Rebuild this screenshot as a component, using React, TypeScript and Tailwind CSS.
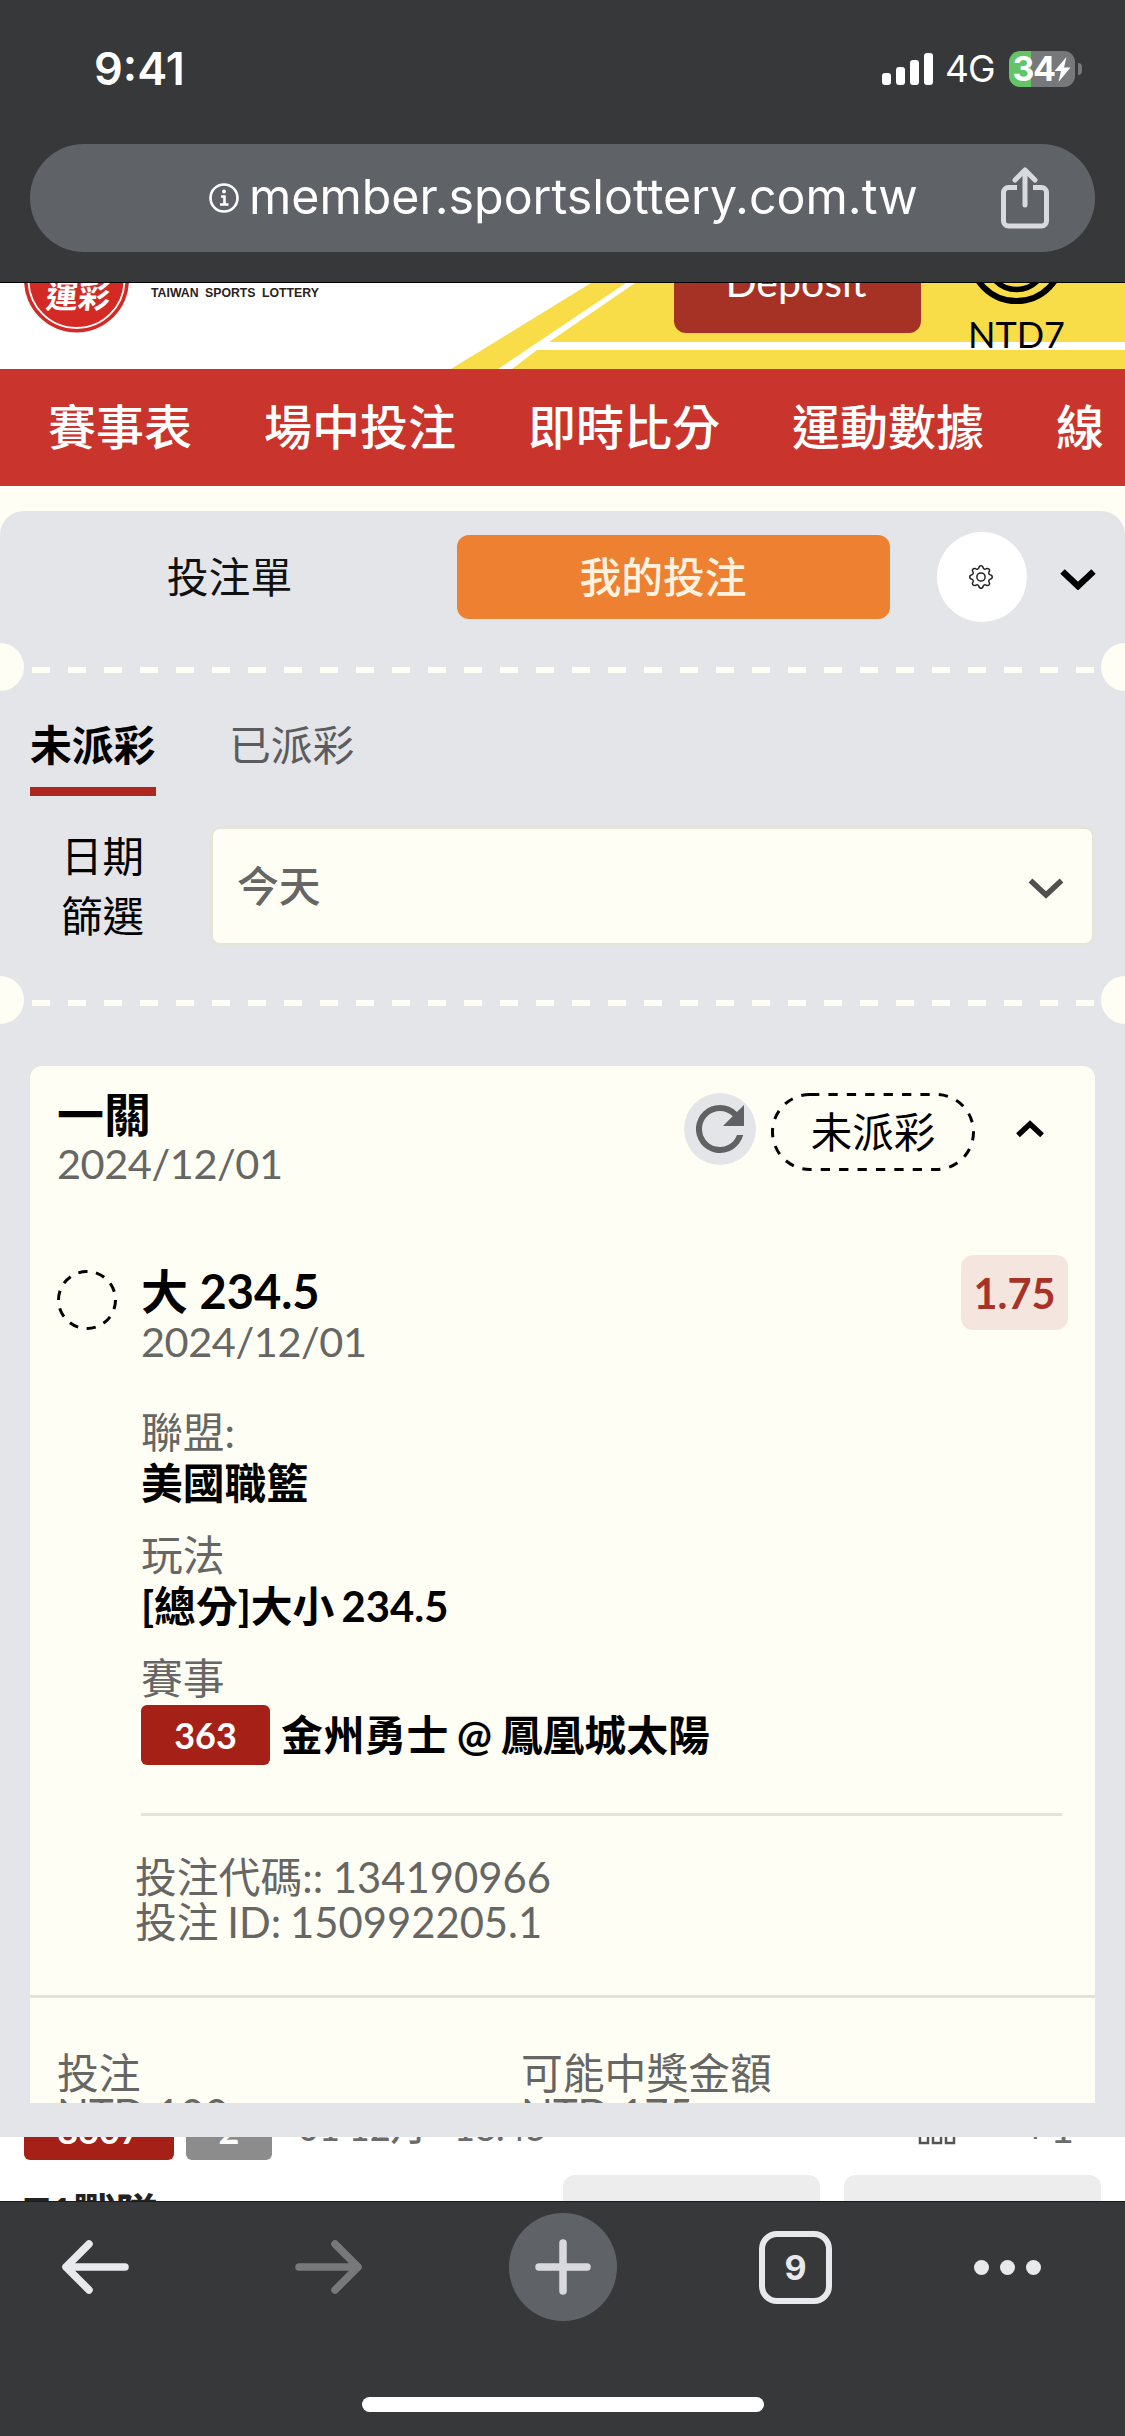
import { ReactNode } from "react";
import { clsx } from "clsx";

const navItems = ["賽事表", "場中投注", "即時比分", "運動數據", "線"];

const details = [
  { label: "聯盟:", value: "美國職籃" },
  { label: "玩法", value: "[總分]大小 234.5" },
];

const signalBars = ["h-3", "h-[18px]", "h-[25px]", "h-8"];

type ChevronProps = {
  className: string;
  strokeWidth?: number;
  up?: boolean;
};

const Chevron = ({ className, strokeWidth = 6.5, up = false }: ChevronProps) => (
  <svg
    viewBox="0 0 36 21"
    fill="none"
    stroke="currentColor"
    strokeWidth={strokeWidth}
    className={clsx(className, up && "rotate-180")}>
    <path d="M2.500 2.500L18 17 33.500 2.500" />
  </svg>
);

const StatusBar = () => (
  <div className="flex h-[144px] items-start justify-between pl-[94px] pr-[43px] pt-[42px] text-white">
    <span className="text-[45px] font-semibold leading-[54px]">9:41</span>
    <div className="flex h-[54px] items-center">
      <div className="flex h-8 items-end gap-[5px]">
        {signalBars.map((height) => (
          <span key={height} className={clsx("w-[9px] rounded-[3px] bg-white", height)} />
        ))}
      </div>
      <span className="ml-3 w-[52px] text-[37px] leading-[54px] tracking-[-1px]">4G</span>
      <div className="ml-[12px] flex h-9 w-[66px] items-center justify-center rounded-[11px] bg-linear-to-r from-[#65c466] from-33% to-[#77787a] to-33% text-[34px] font-bold leading-9 tracking-[-1.500px]">
        34
        <svg viewBox="0 0 16 25" className="h-[25px] w-[17px] fill-white">
          <path d="M12 0L0 14h6.500L4 25 16 10.500H9.500z" />
        </svg>
      </div>
      <span className="ml-[3px] h-3 w-1 rounded-r-full bg-[#77787a]" />
    </div>
  </div>
);

const AddressBar = () => (
  <div className="mx-[30px] flex h-[108px] items-center rounded-full bg-[#5f6267] pl-[179px] pr-[45px] text-white">
    <svg viewBox="0 0 30 30" fill="none" stroke="currentColor" strokeWidth="2.600" className="h-[30px] w-[30px]">
      <circle cx="15" cy="15" r="13.500" />
      <path d="M12 13.500h3.500v7.500M11 21.500h8.500" />
      <circle cx="15" cy="8.500" r="2" fill="currentColor" stroke="none" />
    </svg>
    <span className="-mt-[2px] ml-[10px] text-[48.300px] leading-none">member.sportslottery.com.tw</span>
    <svg
      viewBox="0 0 50 62"
      fill="none"
      stroke="#d9dae0"
      strokeWidth="5"
      className="ml-auto h-[62px] w-[50px]">
      <path d="M17 20.500H8.500a5 5 0 0 0-5 5v28.500a5 5 0 0 0 5 5h33a5 5 0 0 0 5-5V25.500a5 5 0 0 0-5-5H33" />
      <path d="M25 38V4M15 13L25 3l10 10" strokeLinecap="round" strokeLinejoin="round" />
    </svg>
  </div>
);

const SiteHeader = () => (
  <div className="relative h-[86px] overflow-hidden bg-white">
    <svg viewBox="0 0 1125 86" className="absolute inset-0 h-full w-full">
      <path d="M451 86L591 0H1125V86z" fill="#f9dd48" />
      <path d="M498 86L626 0h9L549 59h576v8H537L512 86z" fill="#fff" />
      <circle cx="76.500" cy="-3" r="52.500" fill="#d32a26" />
      <circle cx="76.500" cy="-3" r="48" fill="none" stroke="#fff" strokeWidth="1.800" />
      <circle cx="1016.500" cy="-28" r="46" fill="none" stroke="#000" strokeWidth="6" />
      <circle cx="1016.500" cy="-23" r="29.500" fill="none" stroke="#000" strokeWidth="5.500" />
    </svg>
    <div className="relative flex">
      <span className="-mt-[3px] ml-[44px] w-[107px] -skew-x-6 text-[32px] font-bold leading-8 text-white">
        運彩
      </span>
      <span className="mt-1 w-[200px] whitespace-nowrap font-['Liberation_Sans',sans-serif] text-[12.300px] font-bold leading-3 text-[#2b2220] [word-spacing:3px]">
        TAIWAN SPORTS LOTTERY
      </span>
      <div className="-mt-[34px] ml-[323px] h-[84px] w-[247px] rounded-xl bg-[#a63226] pr-[3px] pt-[8px] text-center text-[41px] leading-[50px] text-white">
        Deposit
      </div>
      <span className="ml-[47px] mt-[29px] text-[36px] leading-[44px] text-black">NTD7</span>
    </div>
  </div>
);

const Perforation = () => (
  <div className="flex h-12 items-center overflow-hidden">
    <span className="-ml-6 h-12 w-12 shrink-0 rounded-full bg-[#fffef5]" />
    <div className="mt-1.5 flex flex-1 justify-between px-[7.500px]">
      {Array.from({ length: 30 }, (_, i) => (
        <span key={i} className="h-1.5 w-[18px] bg-[#fffef5]" />
      ))}
    </div>
    <span className="-mr-6 h-12 w-12 shrink-0 rounded-full bg-[#fffef5]" />
  </div>
);

const PanelHeader = () => (
  <div className="flex h-[132px] items-center">
    <span className="w-[457px] pl-[2px] text-center text-[41.800px] text-[#111]">投注單</span>
    <div className="flex h-[84px] w-[433px] items-center justify-center rounded-xl bg-[#ee8131] pr-[21px] text-[41.800px] font-medium text-[#fff3e0]">
      我的投注
    </div>
    <div className="ml-[47px] flex h-[90px] w-[90px] items-center justify-center rounded-full bg-white pr-[2px]">
      <svg viewBox="0 0 16 16" className="h-6 w-6 fill-[#222]">
        <path d="M8 4.754a3.246 3.246 0 1 0 0 6.492 3.246 3.246 0 0 0 0-6.492M5.754 8a2.246 2.246 0 1 1 4.492 0 2.246 2.246 0 0 1-4.492 0" />
        <path d="M9.796 1.343c-.527-1.790-3.065-1.790-3.592 0l-.094.319a.873.873 0 0 1-1.255.520l-.292-.160c-1.640-.892-3.433.902-2.540 2.541l.159.292a.873.873 0 0 1-.520 1.255l-.319.094c-1.790.527-1.790 3.065 0 3.592l.319.094a.873.873 0 0 1 .520 1.255l-.160.292c-.892 1.640.901 3.434 2.541 2.540l.292-.159a.873.873 0 0 1 1.255.520l.094.319c.527 1.790 3.065 1.790 3.592 0l.094-.319a.873.873 0 0 1 1.255-.520l.292.160c1.640.893 3.434-.902 2.540-2.541l-.159-.292a.873.873 0 0 1 .520-1.255l.319-.094c1.790-.527 1.790-3.065 0-3.592l-.319-.094a.873.873 0 0 1-.520-1.255l.160-.292c.893-1.640-.902-3.433-2.541-2.540l-.292.159a.873.873 0 0 1-1.255-.520zm-2.633.283c.246-.835 1.428-.835 1.674 0l.094.319a1.873 1.873 0 0 0 2.693 1.115l.291-.160c.764-.415 1.600.420 1.184 1.185l-.159.292a1.873 1.873 0 0 0 1.116 2.692l.318.094c.835.246.835 1.428 0 1.674l-.319.094a1.873 1.873 0 0 0-1.115 2.693l.160.291c.415.764-.420 1.600-1.185 1.184l-.291-.159a1.873 1.873 0 0 0-2.693 1.116l-.094.318c-.246.835-1.428.835-1.674 0l-.094-.319a1.873 1.873 0 0 0-2.692-1.115l-.292.160c-.764.415-1.600-.420-1.184-1.185l.159-.291A1.873 1.873 0 0 0 1.945 8.930l-.319-.094c-.835-.246-.835-1.428 0-1.674l.319-.094A1.873 1.873 0 0 0 3.060 4.377l-.160-.292c-.415-.764.420-1.600 1.185-1.184l.292.159a1.873 1.873 0 0 0 2.692-1.115z" />
      </svg>
    </div>
    <Chevron className="ml-[33px] mt-1 h-[21px] w-9 text-black" />
  </div>
);

const Filters = () => (
  <div className="h-[285px] pt-[24px]">
    <div className="flex gap-[73px] pl-[30px] text-[41.800px] leading-[60px]">
      <span className="h-[81px] w-[126px] border-b-[9px] border-[#ae2620] font-bold text-black">未派彩</span>
      <span className="text-[#5c5c5e]">已派彩</span>
    </div>
    <div className="mt-[30px] flex">
      <div className="w-[210px] pl-[61px] text-[41.500px] leading-[60px] text-black">
        日期
        <br />
        篩選
      </div>
      <div className="flex h-[120px] w-[885px] items-center justify-between rounded-[10px] border-[3px] border-[#e5e4da] bg-[#fffef5] pl-6 pr-7 text-[41.800px] font-medium text-[#666664]">
        今天
        <Chevron strokeWidth={5.5} className="mt-1 h-[21px] w-9 text-[#50504e]" />
      </div>
    </div>
  </div>
);

const Label = ({ children }: { children: ReactNode }) => (
  <p className="text-[41.800px] leading-[50px] text-[#666664]">{children}</p>
);

const DateLine = () => (
  <p className="text-[41.500px] leading-[46px] tracking-[-0.450px] text-[#666664]">2024/12/01</p>
);

const BetCard = () => (
  <div className="mx-[30px] mt-[42px] h-[1037px] overflow-hidden rounded-t-xl bg-[#fffef5]">
    <div className="flex h-[189px] pl-[27px] pt-[23px]">
      <div className="w-[627px]">
        <p className="text-[47px] font-bold leading-[51px] text-black">一關</p>
        <DateLine />
      </div>
      <div className="mt-1 flex h-[72px] w-[72px] items-center justify-center rounded-full bg-[#e4e5e8]">
        <svg viewBox="4 4 16 16" className="h-[48px] w-[48px] fill-[#616163]">
          <path d="M17.650 6.350A7.958 7.958 0 0 0 12 4a8 8 0 1 0 7.730 10h-2.080A6 6 0 1 1 12 6c1.660 0 3.140.690 4.220 1.780L13 11h7V4z" />
        </svg>
      </div>
      <div className="relative ml-[15px] mt-1 flex h-[78px] w-[204px] items-center justify-center text-[41.500px] text-black">
        <svg viewBox="0 0 204 78" fill="none" className="absolute inset-0">
          <rect x="1.500" y="1.500" width="201" height="75" rx="37.500" stroke="#000" strokeWidth="3" strokeDasharray="9.300 9.100" />
        </svg>
        未派彩
      </div>
      <Chevron up strokeWidth={7} className="ml-[41px] mt-[31px] h-[18px] w-7 text-black" />
    </div>

    <div className="flex pl-[27px]">
      <svg viewBox="0 0 60 60" fill="none" className="mt-[15px] h-[60px] w-[60px]">
        <circle cx="30" cy="30" r="28.500" stroke="#000" strokeWidth="3" strokeDasharray="9.300 8.600" />
      </svg>
      <div className="ml-6 w-[820px] pt-[10px]">
        <p className="text-[47px] font-bold leading-[53px] text-black">大 234.5</p>
        <DateLine />
      </div>
      <div className="h-[75px] w-[107px] rounded-xl bg-[#f4e5df] text-center text-[41.500px] font-bold leading-[77px] text-[#a93226]">
        1.75
      </div>
    </div>

    <div className="ml-[111px] mr-[33px] h-[452px] border-b-[3px] border-[#e4e3da] pt-[43px]">
      {details.map(({ label, value }) => (
        <div key={label} className="mb-[21px]">
          <Label>{label}</Label>
          <p className="text-[41.800px] font-bold leading-[52px] text-black [word-spacing:-3px]">{value}</p>
        </div>
      ))}
      <Label>賽事</Label>
      <div className="mt-0.5 flex items-center text-[41.800px] font-bold leading-[60px] text-black [word-spacing:-1.500px]">
        <span className="mr-[11px] h-[60px] w-[129px] rounded-md bg-[#a52017] text-center text-[36px] text-white">
          363
        </span>
        金州勇士 @ 鳳凰城太陽
      </div>
    </div>

    <div className="h-[182px] border-b-[3px] border-[#e4e3da] pl-[105px] pt-[39px] text-[41.800px] leading-[45px] text-[#666664]">
      <p className="[word-spacing:-1px]">投注代碼:: 134190966</p>
      <p className="[word-spacing:-2px]">投注 ID: 150992205.1</p>
    </div>

    <div className="grid grid-cols-[464px_1fr] pl-[27px] pt-[53px] text-[41.800px] leading-[44px] text-[#666664]">
      <span>投注</span>
      <span>可能中獎金額</span>
      <span className="-mt-[3px]">NTD 100</span>
      <span className="-mt-[3px]">NTD 175</span>
    </div>
  </div>
);

const MatchList = () => (
  <div className="h-[64px] overflow-hidden bg-white">
    <div className="flex h-[38px] items-end text-[36px] leading-[50px] text-[#6b6b6b]">
      <div className="mb-[15px] ml-6 w-[150px] rounded-md bg-[#a52017] text-center text-[36px] font-bold leading-[60px] text-white">
        8607
      </div>
      <div className="mb-[15px] ml-3 w-[86px] rounded-md bg-[#8c8c8c] text-center text-[36px] font-bold leading-[60px] text-white">
        2
      </div>
      <span className="mb-[23px] ml-[26px] w-[156px] whitespace-nowrap font-medium">01 12月</span>
      <span className="mb-[23px] font-medium">18:45</span>
      <svg viewBox="0 0 38 36" fill="none" stroke="#555" strokeWidth="2.500" className="mb-[30px] ml-auto h-9 w-[38px]">
        <path d="M2 12h8v22H2zM15 4h8v30h-8zM28 16h8v18h-8z" />
      </svg>
      <span className="mb-[22px] ml-[67px] mr-[48px] text-[41px] tracking-[3px]">+1</span>
    </div>
    <div className="flex">
      <p className="ml-6 w-[539px] pt-[8px] text-[42px] font-bold leading-[60px] text-[#222]">T1戰隊</p>
      <div className="h-[90px] w-[257px] rounded-xl bg-[#ededed]" />
      <div className="ml-6 h-[90px] w-[257px] rounded-xl bg-[#ededed]" />
    </div>
  </div>
);

const Arrow = ({ className }: { className: string }) => (
  <svg
    viewBox="0 0 67 54"
    fill="none"
    stroke="currentColor"
    strokeWidth="7.500"
    strokeLinecap="round"
    strokeLinejoin="round"
    className={clsx("h-[54px] w-[67px]", className)}>
    <path d="M63 27H4M27 4L4 27l23 23" />
  </svg>
);

const Toolbar = () => (
  <div className="flex h-[235px] flex-col items-center justify-between border-t border-[#1b1b1c] bg-[#373839] pb-6 pt-[11px]">
    <div className="flex h-[108px] w-full items-center pl-[62px]">
      <Arrow className="text-[#e8e9ed]" />
      <Arrow className="ml-[166px] rotate-180 text-[#77787a]" />
      <div className="ml-[147px] flex h-[108px] w-[108px] items-center justify-center rounded-full bg-[#5f6367]">
        <svg viewBox="0 0 56 56" stroke="#d9dae0" strokeWidth="7.500" strokeLinecap="round" className="h-14 w-14">
          <path d="M28 4v48M4 28h48" />
        </svg>
      </div>
      <div className="ml-[142px] flex h-[73px] w-[73px] items-center justify-center rounded-[18px] border-[6px] border-[#e8e9ed] text-[34px] font-bold text-[#e8e9ed]">
        9
      </div>
      <div className="ml-[142px] flex gap-[11px]">
        {[0, 1, 2].map((dot) => (
          <span key={dot} className="h-[15px] w-[15px] rounded-full bg-[#e8e9ed]" />
        ))}
      </div>
    </div>
    <div className="h-[15px] w-[402px] rounded-full bg-white" />
  </div>
);

const App = () => {
  return (
    <div className="h-[2436px] w-[1125px] overflow-hidden bg-[#fffef5] font-['Inter',sans-serif]">
      <div className="h-[283px] border-b border-black bg-[#373839]">
        <StatusBar />
        <AddressBar />
      </div>

      <div className="font-['Lato','Noto_Sans_CJK_TC',sans-serif]">
        <SiteHeader />
        <nav className="flex h-[117px] gap-[72px] whitespace-nowrap bg-[#c9342c] pl-[48px] text-[48px] font-medium leading-[115px] text-white">
          {navItems.map((item) => (
            <span key={item}>{item}</span>
          ))}
        </nav>

        <div className="mt-[25px] h-[1626px] rounded-t-[24px] bg-[#e4e5e8]">
          <PanelHeader />
          <Perforation />
          <Filters />
          <Perforation />
          <BetCard />
        </div>
        <MatchList />
      </div>

      <Toolbar />
    </div>
  );
};

export default App;
